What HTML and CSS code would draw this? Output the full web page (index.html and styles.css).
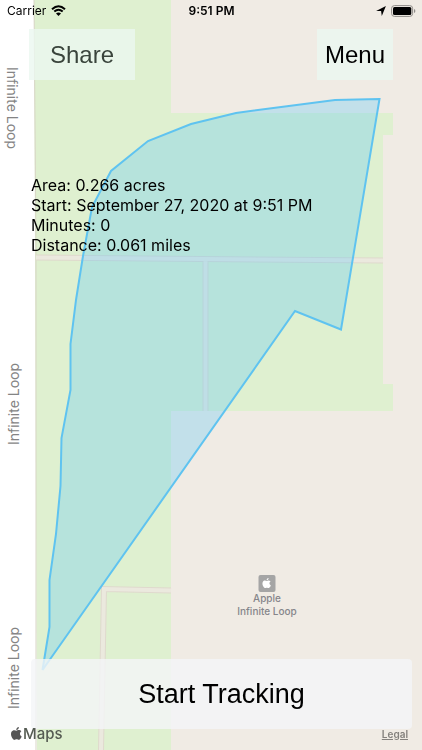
FILE: index.html
```html
<!DOCTYPE html>
<html lang="en">
<head>
<meta charset="utf-8">
<meta name="viewport" content="width=device-width, initial-scale=1">
<title>Area Tracker</title>
<link rel="stylesheet" href="styles.css">
</head>
<body>
<svg class="map" viewBox="0 0 422 750" preserveAspectRatio="xMinYMin slice" role="img" aria-label="Map">
  <defs>
    <path id="apple" d="M11.2 3.2C11.9 2.3 12.3 1.2 12.2 0C11.1.1 9.9.7 9.2 1.6C8.5 2.4 8 3.5 8.2 4.6C9.3 4.7 10.5 4.1 11.2 3.2ZM12.2 4.9C10.6 4.8 9.2 5.8 8.4 5.8C7.6 5.8 6.3 5 5 5C3.200 5 1.600 6 .7 7.500C-1 10.600.2 15.200 2 17.700C2.900 18.900 3.900 20.300 5.300 20.200C6.600 20.200 7.100 19.400 8.700 19.400C10.300 19.400 10.700 20.200 12.100 20.200C13.500 20.200 14.400 19 15.200 17.700C16.200 16.300 16.600 14.900 16.600 14.800C16.600 14.800 13.900 13.700 13.900 10.700C13.900 8.100 16 6.900 16.100 6.800C14.900 5.100 13.100 4.900 12.200 4.900Z"/>
  </defs>
  <rect class="street" width="422" height="750"/>
  <path class="park" d="M34 0H172V750H37Z"/>
  <path class="block" d="M171 0H422V750H171Z"/>
  <path class="park" d="M170 113H393V135H383V384H393V411H170Z"/>
  <path class="curb" d="M34 0L36 250V750"/>
  <g class="path-edge">
    <path d="M36 257.500L383 260.500M205.500 259V411M171 590.500L104 589L101 750"/>
  </g>
  <g class="path-fill">
    <path d="M36 257.500L383 260.500M205.500 259V411M171 590.500L104 589L101 750"/>
  </g>
  <path class="track" d="M379.500 99L335 100L285 106.500L236 113L191 124L148 141L111 171L92 207L83 256L76 300L70.500 344V390L61.500 438L60.500 486L56 534L49.500 580V627L42.500 670L295 311L341 329.500Z"/>
  <g class="road-name">
    <text transform="translate(7 108) rotate(90)">Infinite Loop</text>
    <text transform="translate(19 404) rotate(-90)">Infinite Loop</text>
    <text transform="translate(19 668) rotate(-90)">Infinite Loop</text>
  </g>
  <rect class="pin" x="258.500" y="575" width="17" height="17" rx="2"/>
  <use class="pin-mark" href="#apple" transform="translate(262.500 578) scale(.5)"/>
  <g class="place-name">
    <text x="267" y="602">Apple</text>
    <text x="267" y="615">Infinite Loop</text>
  </g>
</svg>

<div class="screen">
  <header class="status">
    <span class="carrier">Carrier
      <svg width="15" height="11" viewBox="0 0 15 11" aria-hidden="true">
        <path d="M1 4.200Q7.500-1.800 14 4.200M3.300 6.600Q7.500 2.900 11.700 6.600" fill="none" stroke="currentColor" stroke-width="2"/>
        <path d="M5 8.600Q7.500 6.500 10 8.600L7.500 11Z"/>
      </svg>
    </span>
    <time class="clock">9:51 PM</time>
    <span class="power">
      <svg width="10" height="10" viewBox="0 0 10 10" aria-hidden="true"><path d="M9.900.1L5.800 9.900L5.100 4.900H.1Z"/></svg>
      <svg width="25" height="12" viewBox="0 0 25 12" aria-hidden="true">
        <rect x=".6" y=".6" width="21" height="10.800" rx="2.800" fill="none" stroke="#8f8c88"/>
        <rect x="2" y="2" width="18.300" height="8" rx="1.500"/>
        <path d="M23 4Q24.400 4.500 24.400 6T23 8Z" fill="#8f8c88"/>
      </svg>
    </span>
  </header>

  <nav class="toolbar">
    <button class="tool tool-share" type="button">Share</button>
    <button class="tool tool-menu" type="button">Menu</button>
  </nav>

  <section class="stats">
    <p>Area: 0.266 acres</p>
    <p>Start: September 27, 2020 at 9:51 PM</p>
    <p>Minutes: 0</p>
    <p>Distance: 0.061 miles</p>
  </section>

  <div class="action"><button class="start" type="button">Start Tracking</button></div>
  <footer class="credits">
    <span class="brand"><svg width="11" height="13" viewBox="0 0 17 20.400" aria-hidden="true"><use href="#apple"/></svg>Maps</span>
    <a class="legal" href="#legal">Legal</a>
  </footer>
</div>
</body>
</html>
```
FILE: styles.css
```css
* { box-sizing: border-box; }

body {
  margin: 0;
  background: #f0ebe4;
  color: #000;
  font-family: Inter, "Liberation Sans", sans-serif;
}

.map {
  position: fixed;
  inset: 0;
  width: 100%;
  height: 100%;
}

.street { fill: #fff; }
.park { fill: #dff0d0; }
.block { fill: #f0ebe4; }
.curb { fill: none; stroke: #d8d5c6; stroke-width: 1; }
.path-edge { fill: none; stroke: #dfd9cd; stroke-width: 6; }
.path-fill { fill: none; stroke: #ebe9de; stroke-width: 4; }
.track {
  fill: rgba(90, 200, 250, 0.3);
  stroke: #5fc3f0;
  stroke-width: 2;
  stroke-linejoin: miter;
}
.road-name { font-size: 14px; fill: #848484; text-anchor: middle; }
.place-name { font-size: 10px; font-weight: 500; fill: #85858a; text-anchor: middle; }
.pin { fill: #a5a5a5; }
.pin-mark { fill: #fff; }

.screen {
  position: relative;
  display: flex;
  flex-direction: column;
  min-height: 100vh;
}

.status {
  display: grid;
  grid-template-columns: 1fr auto 1fr;
  align-items: center;
  height: 21px;
  padding: 0 6px 0 7px;
  font-size: 12px;
}
.carrier, .power { display: flex; align-items: center; gap: 5px; }
.power { justify-content: flex-end; }
.clock { font-weight: 600; }

.toolbar {
  display: flex;
  justify-content: space-between;
  margin-top: 8px;
  padding: 0 29px;
}
.tool, .start {
  border: 0;
  color: #000;
  font-family: "Liberation Sans", Arial, sans-serif;
}
.tool {
  height: 51px;
  padding: 0 8px;
  background: rgba(235, 248, 240, 0.8);
  font-size: 24px;
}
.tool-share { padding: 0 21px; color: #3a443c; }

.stats {
  margin-top: 95px;
  padding: 0 31px;
  font-size: 16px;
  line-height: 20px;
}
.stats p { margin: 0; }

.action {
  margin-top: auto;
  padding: 0 10px 0 31px;
}
.start {
  width: 100%;
  height: 70px;
  border-radius: 4px;
  background: rgba(244, 245, 248, 0.8);
  font-size: 27px;
}

.credits {
  display: flex;
  justify-content: space-between;
  align-items: center;
  height: 21px;
  padding: 0 14px 12px 11px;
}
.brand {
  display: flex;
  align-items: center;
  gap: 1px;
  color: #555b52;
  font-size: 15px;
  font-weight: 500;
}
.brand svg { fill: #555; }
.legal { color: #85827e; font-size: 10px; font-weight: 600; }
```
